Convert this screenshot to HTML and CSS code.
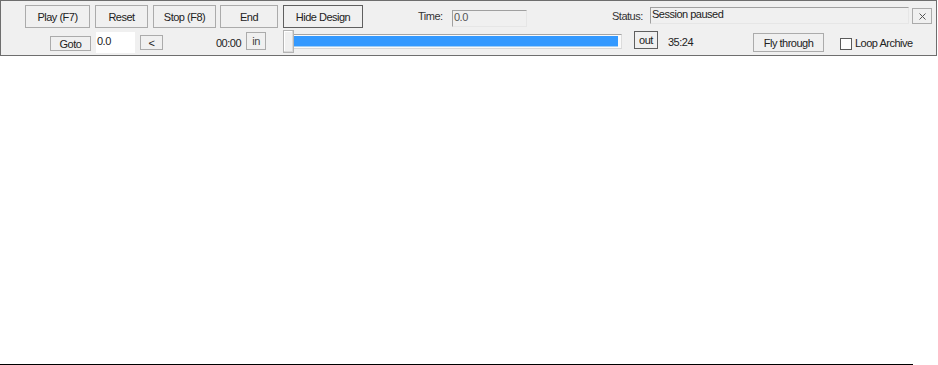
FILE: index.html
```html
<!DOCTYPE html>
<html lang="en">
<head>
    <meta charset="UTF-8">
    <title>Session Player</title>
    <link rel="stylesheet" href="styles.css">
</head>
<body>
    <div class="player">
        <div class="row row-top">
            <button class="btn btn-play">Play (F7)</button>
            <button class="btn btn-reset">Reset</button>
            <button class="btn btn-stop">Stop (F8)</button>
            <button class="btn btn-end">End</button>
            <button class="btn btn-default btn-hide">Hide Design</button>
            <span class="label label-time">Time:</span>
            <div class="field field-time">0.0</div>
            <span class="label label-status">Status:</span>
            <div class="field field-status">Session paused</div>
            <button class="btn btn-close" aria-label="Close">
                <svg width="7" height="7" viewBox="0 0 7 7">
                    <path d="M0.5 0.5 L6.5 6.5 M6.5 0.5 L0.5 6.5" stroke="#555" stroke-width="1" fill="none"/>
                </svg>
            </button>
        </div>
        <div class="row row-bottom">
            <button class="btn btn-goto">Goto</button>
            <div class="goto-input">0.0</div>
            <button class="btn btn-back">&lt;</button>
            <span class="time-text time-start">00:00</span>
            <button class="btn btn-in">in</button>
            <div class="slider-thumb"></div>
            <div class="track"><div class="track-fill"></div></div>
            <button class="btn btn-default btn-out">out</button>
            <span class="time-text time-end">35:24</span>
            <button class="btn btn-fly">Fly through</button>
            <span class="checkbox"></span>
            <span class="check-label">Loop Archive</span>
        </div>
    </div>
    <div class="rule"></div>
</body>
</html>
```

FILE: styles.css
```css
* {
    margin: 0;
    padding: 0;
    box-sizing: border-box;
}

body {
    font-family: "Liberation Sans", Arial, sans-serif;
    font-size: 11px;
    letter-spacing: -0.5px;
    color: #222;
    background: #fff;
    width: 938px;
    height: 365px;
    position: relative;
}

.player {
    width: 937px;
    height: 56px;
    background: #f0f0f0;
    border: 1px solid #6e6e6e;
}

.row {
    display: flex;
    align-items: flex-start;
}

.row-top {
    height: 31px;
}

.row-bottom {
    height: 23px;
}

/* Buttons */
.btn {
    font: inherit;
    letter-spacing: inherit;
    color: #222;
    background: #f0f0f0;
    border: 1px solid #ababab;
    display: flex;
    align-items: center;
    justify-content: center;
    line-height: 12px;
    flex-shrink: 0;
}

.btn-default {
    border-color: #5f5f5f;
}

.row-top .btn {
    margin-top: 4px;
    height: 23px;
}

.btn-play { margin-left: 24px; width: 65px; }
.btn-reset { margin-left: 5px; width: 53px; }
.btn-stop { margin-left: 5px; width: 63px; }
.btn-end { margin-left: 4px; width: 58px; }
.btn-hide { margin-left: 5px; width: 80px; }

.row-top .btn-close {
    margin-left: 3px;
    margin-top: 7px;
    width: 20px;
    height: 16px;
}

.label {
    margin-top: 9px;
    line-height: 13px;
    color: #333;
    flex-shrink: 0;
}

.label-time { margin-left: 55px; width: 34px; }
.label-status { margin-left: 85px; width: 38px; }

.field {
    height: 17px;
    border: 1px solid #e6e6e6;
    border-top-color: #a0a0a0;
    border-left-color: #a0a0a0;
    line-height: 12px;
    padding-left: 1px;
    flex-shrink: 0;
}

.field-time {
    margin-top: 9px;
    width: 75px;
    color: #555;
}

.field-status {
    margin-top: 6px;
    width: 259px;
}

/* Second row */
.btn-goto {
    margin-left: 49px;
    margin-top: 4px;
    width: 41px;
    height: 15px;
}

.goto-input {
    margin-left: 5px;
    width: 39px;
    height: 21px;
    background: #fff;
    padding: 3px 0 0 1px;
    line-height: 12px;
}

.btn-back {
    margin-left: 5px;
    margin-top: 3px;
    width: 23px;
    height: 15px;
}

.time-text {
    line-height: 13px;
    margin-top: 5px;
    flex-shrink: 0;
}

.time-start {
    margin-left: 53px;
    width: 30px;
}

.btn-in {
    width: 20px;
    height: 18px;
    color: #444;
}

.slider-thumb {
    margin-left: 17px;
    margin-top: -2px;
    width: 11px;
    height: 23px;
    background: #f0f0f0;
    border: 1px solid #b4b4b4;
    box-shadow: inset -1px -1px #dadada, inset 1px 1px #fff;
    flex-shrink: 0;
}

.track {
    margin-top: 2px;
    width: 328px;
    height: 15px;
    border-top: 1px solid #a5a5a5;
    border-bottom: 1px solid #d6d6d6;
    border-right: 1px solid #dcdcdc;
    background: #fafafa;
    padding: 1px 3px 1px 0;
}

.track-fill {
    height: 11px;
    background: #3399ff;
    border-bottom: 1px solid #9fcdf5;
}

.btn-out {
    margin-left: 12px;
    margin-top: -1px;
    width: 24px;
    height: 18px;
}

.time-end {
    margin-left: 10px;
    margin-top: 4px;
    width: 85px;
}

.btn-fly {
    margin-top: 1px;
    width: 71px;
    height: 19px;
}

.checkbox {
    margin-left: 16px;
    margin-top: 6px;
    width: 12px;
    height: 12px;
    background: #fff;
    border: 1px solid #5a5a5a;
    flex-shrink: 0;
}

.check-label {
    margin-left: 3px;
    margin-top: 5px;
    line-height: 13px;
}

.rule {
    position: absolute;
    left: 0;
    top: 364px;
    width: 913px;
    height: 1px;
    background: #000;
}
```
